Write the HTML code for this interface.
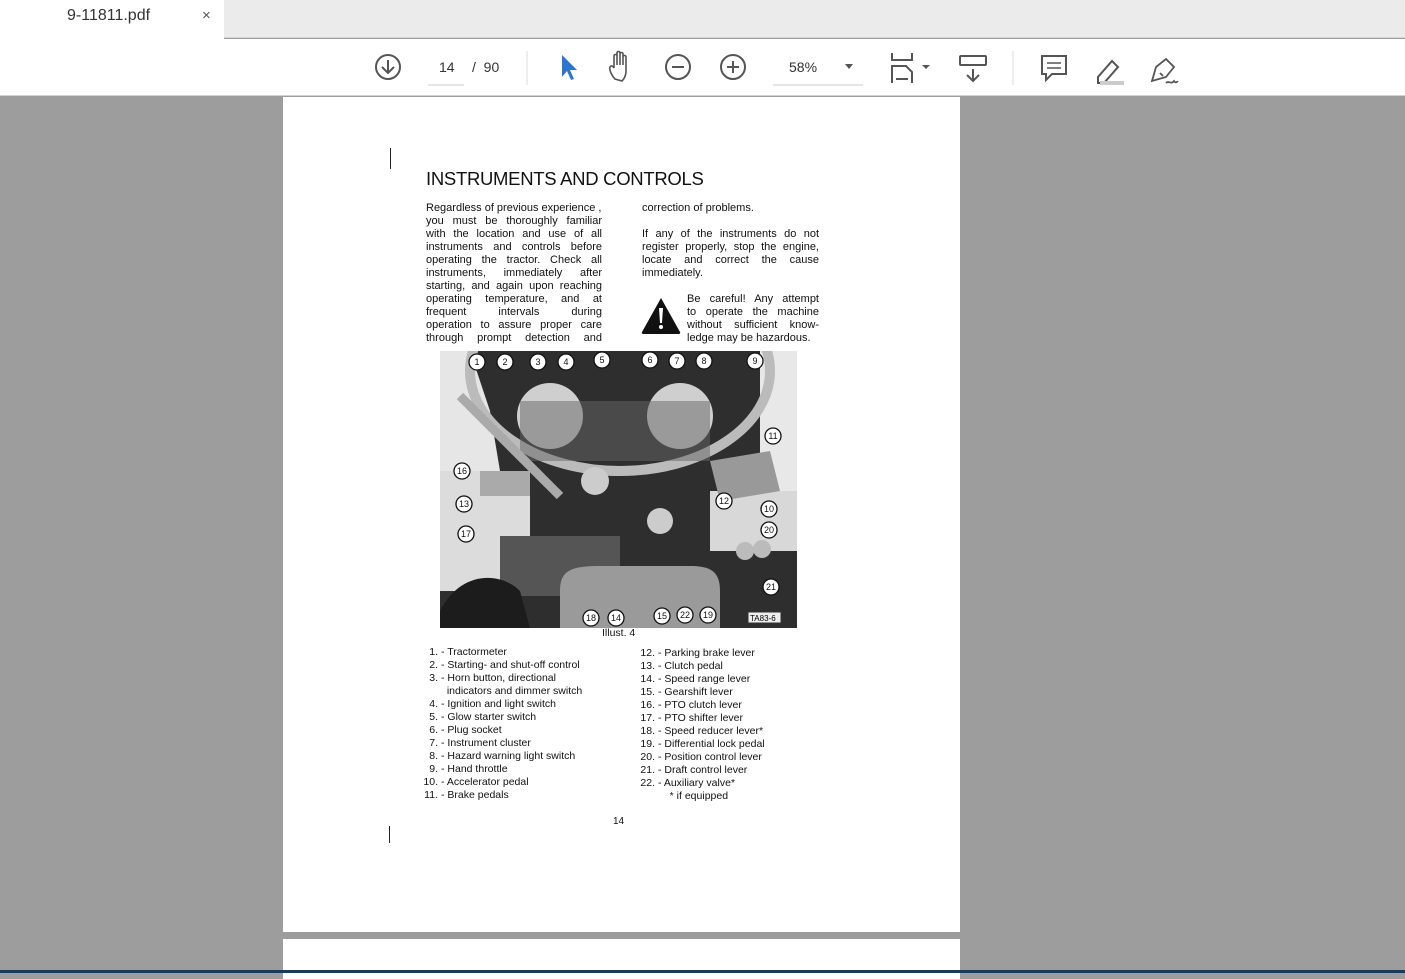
<!DOCTYPE html>
<html><head><style>
*{margin:0;padding:0;box-sizing:border-box}
body{width:1405px;height:973px;overflow:hidden;background:#9d9d9d;font-family:"Liberation Sans",sans-serif;position:relative}
.a{position:absolute}
.j{position:absolute;font-size:11px;line-height:13px;text-align:justify;text-align-last:justify;white-space:nowrap;color:#111}
.l{position:absolute;font-size:10.5px;line-height:13px;color:#111;white-space:nowrap}
.n{display:inline-block;width:18px;text-align:right;margin-right:3px}
</style></head><body>
<div class="a" style="left:0;top:0;width:1405px;height:38px;background:#ebebeb;border-bottom:1px solid #d6d6d6"></div>
<div class="a" style="left:0;top:0;width:224px;height:39px;background:#fff"></div>
<div class="a" style="left:67px;top:7px;font-size:16px;color:#333">9-11811.pdf</div>
<div class="a" style="left:202px;top:7px;font-size:15px;color:#555">×</div>
<div class="a" style="left:0;top:39px;width:1405px;height:57px;background:#fff;border-bottom:1px solid #d0d0d0"></div>
<svg class="a" style="left:0;top:39px" width="1405" height="57" fill="none" stroke="#555" stroke-width="2">
<circle cx="388" cy="28" r="12"/><path d="M388 21v13M382 28l6 6 6-6"/>
<line x1="428" y1="46" x2="464" y2="46" stroke="#ccc" stroke-width="1"/>
<line x1="527" y1="12" x2="527" y2="46" stroke="#ddd" stroke-width="1"/>
<path d="M562 16l0 22 5-6 4 9 3-1-4-9 7 0z" fill="#2a74d6" stroke="none"/>
<path d="M615 40c-3-3-6-9-5-12 1-2 3-1 4 1v-12c0-2 3-2 3 0v9-12c0-2 3-2 3 0v12-11c0-2 3-2 3 0v11-8c0-2 3-2 3 0v14c0 5-2 8-4 10z" stroke-width="1.6"/>
<circle cx="678" cy="28" r="12"/><path d="M672 28h12"/>
<circle cx="733" cy="28" r="12"/><path d="M727 28h12M733 22v12"/>
<line x1="773" y1="46" x2="863" y2="46" stroke="#ccc" stroke-width="1"/>
<path d="M845 25h8l-4 5z" fill="#555" stroke="none"/>
<path d="M892 14v7h20v-7M892 44v-17h14l6 6v11M896 40h12" stroke-width="2"/>
<path d="M922 26h8l-4 4z" fill="#555" stroke="none"/>
<rect x="960" y="17" width="26" height="9" rx="1"/><path d="M973 30v12M967 36l6 6 6-6"/>
<line x1="1013" y1="12" x2="1013" y2="46" stroke="#ddd" stroke-width="1"/>
<path d="M1042 17h24v18h-14l-6 6v-6h-4z"/><path d="M1047 24h14M1047 29h14" stroke-width="1.5"/>
<path d="M1098 38l14-16 6 6-14 16-6 0z"/><rect x="1100" y="42" width="24" height="4" fill="#ccc" stroke="none"/>
<path d="M1152 42l4-14 10-8 8 8-8 10z M1160 34l3 3 M1166 44c3-3 5 2 8-2 2 3 3 0 4 1" stroke-width="1.8"/>
</svg>
<div class="a" style="left:439px;top:59px;font-size:14px;color:#333">14</div>
<div class="a" style="left:472px;top:59px;font-size:14px;color:#333">/ &nbsp;90</div>
<div class="a" style="left:789px;top:59px;font-size:14px;color:#333">58%</div>

<div class="a" style="left:283px;top:97px;width:677px;height:835px;background:#fff"></div>
<div class="a" style="left:283px;top:939px;width:677px;height:40px;background:#fff"></div>
<div class="a" style="left:0;top:970px;width:1405px;height:3px;background:#1d3a52"></div>
<div class="a" style="left:390px;top:148px;width:1px;height:21px;background:#222"></div>
<div class="a" style="left:389px;top:826px;width:1px;height:17px;background:#222"></div>

<div class="a" style="left:426px;top:168px;font-size:18.5px;color:#111;letter-spacing:-0.3px">INSTRUMENTS AND CONTROLS</div>
<div class="j" style="left:426px;top:202px;width:176px">Regardless of previous experience ,&nbsp;<br>you must be thoroughly familiar<br>with the location and use of all<br>instruments and controls before<br>operating the tractor. Check all<br>instruments, immediately after<br>starting, and again upon reaching<br>operating temperature, and at<br>frequent intervals during<br>operation to assure proper care<br>through prompt detection and</div>
<div class="l" style="left:642px;top:202px;font-size:11px">correction of problems.</div>
<div class="j" style="left:642px;top:228px;width:177px">If any of the instruments do not<br>register properly, stop the engine,<br>locate and correct the cause</div>
<div class="l" style="left:642px;top:267px;font-size:11px">immediately.</div>
<div class="j" style="left:687px;top:293px;width:132px">Be careful! Any attempt<br>to operate the machine<br>without sufficient know-</div>
<div class="l" style="left:687px;top:332px;font-size:11px">ledge may be hazardous.</div>
<svg class="a" style="left:640px;top:296px" width="42" height="40"><path d="M21 2L40 36Q41 38 38 38H4Q1 38 2 36Z" fill="#111"/><path d="M19 12h4l-1 15h-2z" fill="#fff"/><circle cx="21" cy="31" r="2" fill="#fff"/></svg>

<svg class="a" style="left:440px;top:351px" width="357" height="277">
<rect width="357" height="277" fill="#2e2e2e"/>
<path d="M0 0h30l20 60 10 60-30 0-30 0z" fill="#e6e6e6"/>
<path d="M0 120h90v120H0z" fill="#dcdcdc"/>
<path d="M320 0h37v200h-37z" fill="#e8e8e8"/>
<path d="M270 140h87v60h-87z" fill="#d8d8d8"/>
<ellipse cx="180" cy="20" rx="150" ry="100" fill="none" stroke="#bbb" stroke-width="10"/>
<circle cx="110" cy="65" r="33" fill="#cfcfcf"/><circle cx="240" cy="65" r="33" fill="#cfcfcf"/>
<rect x="80" y="50" width="190" height="60" fill="#666" opacity=".5"/>
<path d="M20 45l100 100" stroke="#aaa" stroke-width="9"/>
<path d="M270 110l60-10 10 40-60 10z" fill="#999"/>
<path d="M40 120h50v25H40z" fill="#aaa"/>
<rect x="60" y="185" width="120" height="60" fill="#555"/>
<path d="M120 240c0-20 10-25 40-25h90c20 0 30 5 30 25v37H120z" fill="#9a9a9a"/>
<path d="M0 260c20-40 60-40 80-20l10 37H0z" fill="#1c1c1c"/>
<circle cx="155" cy="130" r="14" fill="#ccc"/><circle cx="220" cy="170" r="13" fill="#ccc"/><circle cx="305" cy="200" r="9" fill="#bbb"/><circle cx="322" cy="198" r="9" fill="#bbb"/>
<rect x="308" y="261" width="33" height="11" fill="#eee" stroke="#333"/><text x="310" y="270" font-size="8" font-family="Liberation Sans">TA83-6</text>
<g fill="#fff" stroke="#111" stroke-width="1.3" font-size="9" font-family="Liberation Sans" text-anchor="middle">
<circle cx="37" cy="11" r="8"/><circle cx="65" cy="11" r="8"/><circle cx="98" cy="11" r="8"/><circle cx="126" cy="11" r="8"/><circle cx="162" cy="9" r="8"/><circle cx="210" cy="9" r="8"/><circle cx="237" cy="10" r="8"/><circle cx="264" cy="10" r="8"/><circle cx="315" cy="10" r="8"/><circle cx="333" cy="85" r="8"/><circle cx="22" cy="120" r="8"/><circle cx="24" cy="153" r="8"/><circle cx="284" cy="150" r="8"/><circle cx="329" cy="158" r="8"/><circle cx="329" cy="179" r="8"/><circle cx="26" cy="183" r="8"/><circle cx="331" cy="236" r="8"/><circle cx="151" cy="267" r="8"/><circle cx="176" cy="267" r="8"/><circle cx="222" cy="265" r="8"/><circle cx="245" cy="264" r="8"/><circle cx="268" cy="264" r="8"/>
</g>
<g fill="#111" font-size="9" font-family="Liberation Sans" text-anchor="middle">
<text x="37" y="14">1</text><text x="65" y="14">2</text><text x="98" y="14">3</text><text x="126" y="14">4</text><text x="162" y="12">5</text><text x="210" y="12">6</text><text x="237" y="13">7</text><text x="264" y="13">8</text><text x="315" y="13">9</text><text x="333" y="88">11</text><text x="22" y="123">16</text><text x="24" y="156">13</text><text x="284" y="153">12</text><text x="329" y="161">10</text><text x="329" y="182">20</text><text x="26" y="186">17</text><text x="331" y="239">21</text><text x="151" y="270">18</text><text x="176" y="270">14</text><text x="222" y="268">15</text><text x="245" y="267">22</text><text x="268" y="267">19</text>
</g>
</svg>
<div class="l" style="left:602px;top:627px;font-size:10.5px">Illust. 4</div>

<div class="l" style="left:420px;top:646px">
<div><span class="n">1.</span>- Tractormeter</div>
<div><span class="n">2.</span>- Starting- and shut-off control</div>
<div><span class="n">3.</span>- Horn button, directional</div>
<div><span class="n"></span>&nbsp; indicators and dimmer switch</div>
<div><span class="n">4.</span>- Ignition and light switch</div>
<div><span class="n">5.</span>- Glow starter switch</div>
<div><span class="n">6.</span>- Plug socket</div>
<div><span class="n">7.</span>- Instrument cluster</div>
<div><span class="n">8.</span>- Hazard warning light switch</div>
<div><span class="n">9.</span>- Hand throttle</div>
<div><span class="n">10.</span>- Accelerator pedal</div>
<div><span class="n">11.</span>- Brake pedals</div>
</div>
<div class="l" style="left:637px;top:647px">
<div><span class="n">12.</span>- Parking brake lever</div>
<div><span class="n">13.</span>- Clutch pedal</div>
<div><span class="n">14.</span>- Speed range lever</div>
<div><span class="n">15.</span>- Gearshift lever</div>
<div><span class="n">16.</span>- PTO clutch lever</div>
<div><span class="n">17.</span>- PTO shifter lever</div>
<div><span class="n">18.</span>- Speed reducer lever*</div>
<div><span class="n">19.</span>- Differential lock pedal</div>
<div><span class="n">20.</span>- Position control lever</div>
<div><span class="n">21.</span>- Draft control lever</div>
<div><span class="n">22.</span>- Auxiliary valve*</div>
<div><span class="n"></span>&nbsp; &nbsp; * if equipped</div>
</div>
<div class="l" style="left:613px;top:815px;font-size:10px">14</div>
</body></html>
